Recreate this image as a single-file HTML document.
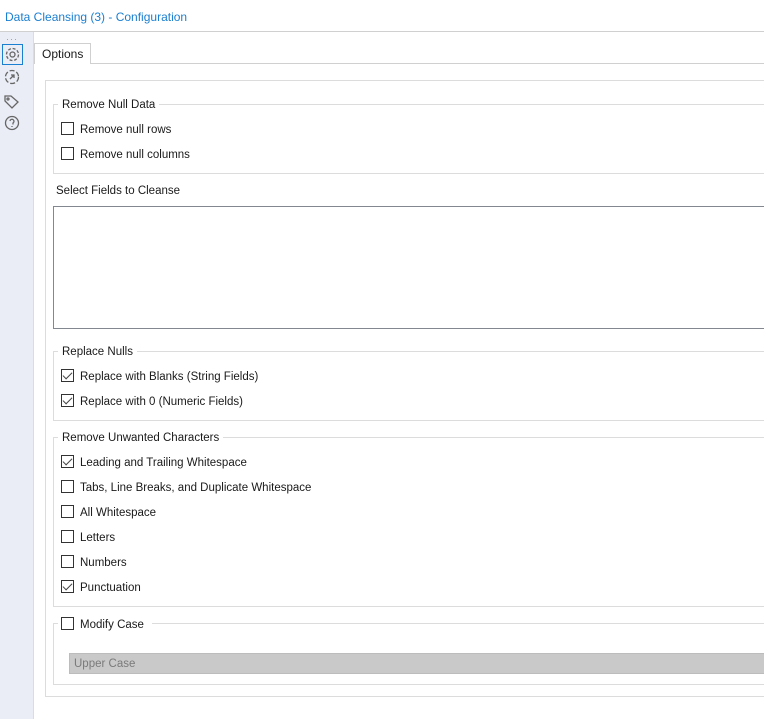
<!DOCTYPE html>
<html><head><style>
*{margin:0;padding:0;box-sizing:border-box}
body{width:764px;height:719px;background:#fff;font-family:"Liberation Sans",sans-serif;font-size:11.5px;color:#1a1a1a;position:relative;overflow:hidden}
.a{position:absolute}
.title{left:5px;top:10px;color:#1a7fd0;font-size:12px}
.side{left:0;top:32px;width:34px;height:687px;background:#eaedf5;border-right:1px solid #d8dce6}
.box{position:absolute;border:1px solid #dcdcdc}
.lg{position:absolute;background:#fff;padding:0 4px;font-size:11.5px;margin-top:2px}
.cb{position:absolute;width:13px;height:13px;border:1px solid #333;background:#fff}
.cb.on::after{content:"";position:absolute;left:3px;top:0px;width:4px;height:8px;border:solid #444;border-width:0 1.5px 1.5px 0;transform:rotate(45deg)}
.lbl{position:absolute;font-size:11.5px;margin-top:2px}
</style></head><body>
<div class="a title">Data Cleansing (3) - Configuration</div>
<div class="a" style="left:0;top:31px;width:764px;height:1px;background:#d0d0d0"></div>
<div class="a side"></div>
<div class="a" style="left:6px;top:34px;color:#999;font-size:9px;letter-spacing:1px">···</div>
<div class="a" style="left:2px;top:44px;width:21px;height:21px;border:1px solid #1a7fd0"></div>
<svg class="a" style="left:0;top:40px" width="34" height="100" fill="none" stroke="#666" stroke-width="1.3">
<circle cx="12.5" cy="14.5" r="2.5"/><circle cx="12.5" cy="14.5" r="6" stroke-dasharray="3 1.7"/>
<circle cx="12" cy="37" r="6.5" stroke-dasharray="5 2"/><path d="M10 39l4-4M11 35h3v3"/>
<path d="M5 56v5l7 7 6-6-7-6z"/><circle cx="8" cy="59" r="1"/>
<circle cx="12" cy="83" r="6.5"/><path d="M10 81a2 2 0 1 1 3 2v1.5M12 86v1"/>
</svg>
<div class="a" style="left:34px;top:43px;width:57px;height:21px;border:1px solid #d0d0d0;border-bottom:none;background:#fff;padding:3px 0 0 7px;font-size:12px">Options</div>
<div class="a" style="left:91px;top:63px;width:673px;height:1px;background:#d0d0d0"></div>
<div class="box" style="left:45px;top:80px;width:730px;height:617px"></div>

<div class="box" style="left:53px;top:104px;width:720px;height:70px"></div>
<div class="lg" style="left:58px;top:97px">Remove Null Data</div>
<div class="cb" style="left:61px;top:122px"></div><div class="lbl" style="left:80px;top:122px">Remove null rows</div>
<div class="cb" style="left:61px;top:147px"></div><div class="lbl" style="left:80px;top:147px">Remove null columns</div>

<div class="lbl" style="left:56px;top:183px">Select Fields to Cleanse</div>
<div class="a" style="left:53px;top:206px;width:720px;height:123px;border:1px solid #828790"></div>

<div class="box" style="left:53px;top:351px;width:720px;height:70px"></div>
<div class="lg" style="left:58px;top:344px">Replace Nulls</div>
<div class="cb on" style="left:61px;top:369px"></div><div class="lbl" style="left:80px;top:369px">Replace with Blanks (String Fields)</div>
<div class="cb on" style="left:61px;top:394px"></div><div class="lbl" style="left:80px;top:394px">Replace with 0 (Numeric Fields)</div>

<div class="box" style="left:53px;top:437px;width:720px;height:170px"></div>
<div class="lg" style="left:58px;top:430px">Remove Unwanted Characters</div>
<div class="cb on" style="left:61px;top:455px"></div><div class="lbl" style="left:80px;top:455px">Leading and Trailing Whitespace</div>
<div class="cb" style="left:61px;top:480px"></div><div class="lbl" style="left:80px;top:480px">Tabs, Line Breaks, and Duplicate Whitespace</div>
<div class="cb" style="left:61px;top:505px"></div><div class="lbl" style="left:80px;top:505px">All Whitespace</div>
<div class="cb" style="left:61px;top:530px"></div><div class="lbl" style="left:80px;top:530px">Letters</div>
<div class="cb" style="left:61px;top:555px"></div><div class="lbl" style="left:80px;top:555px">Numbers</div>
<div class="cb on" style="left:61px;top:580px"></div><div class="lbl" style="left:80px;top:580px">Punctuation</div>

<div class="box" style="left:53px;top:623px;width:720px;height:62px"></div>
<div class="lg" style="left:58px;top:614px;width:94px;height:16px"></div>
<div class="cb" style="left:61px;top:617px"></div><div class="lbl" style="left:80px;top:617px">Modify Case</div>
<div class="a" style="left:69px;top:653px;width:700px;height:21px;background:#c9c9c9;border:1px solid #bcbcbc;color:#7a7a7a;padding:4px 0 0 4px;font-size:11.5px">Upper Case</div>
</body></html>
